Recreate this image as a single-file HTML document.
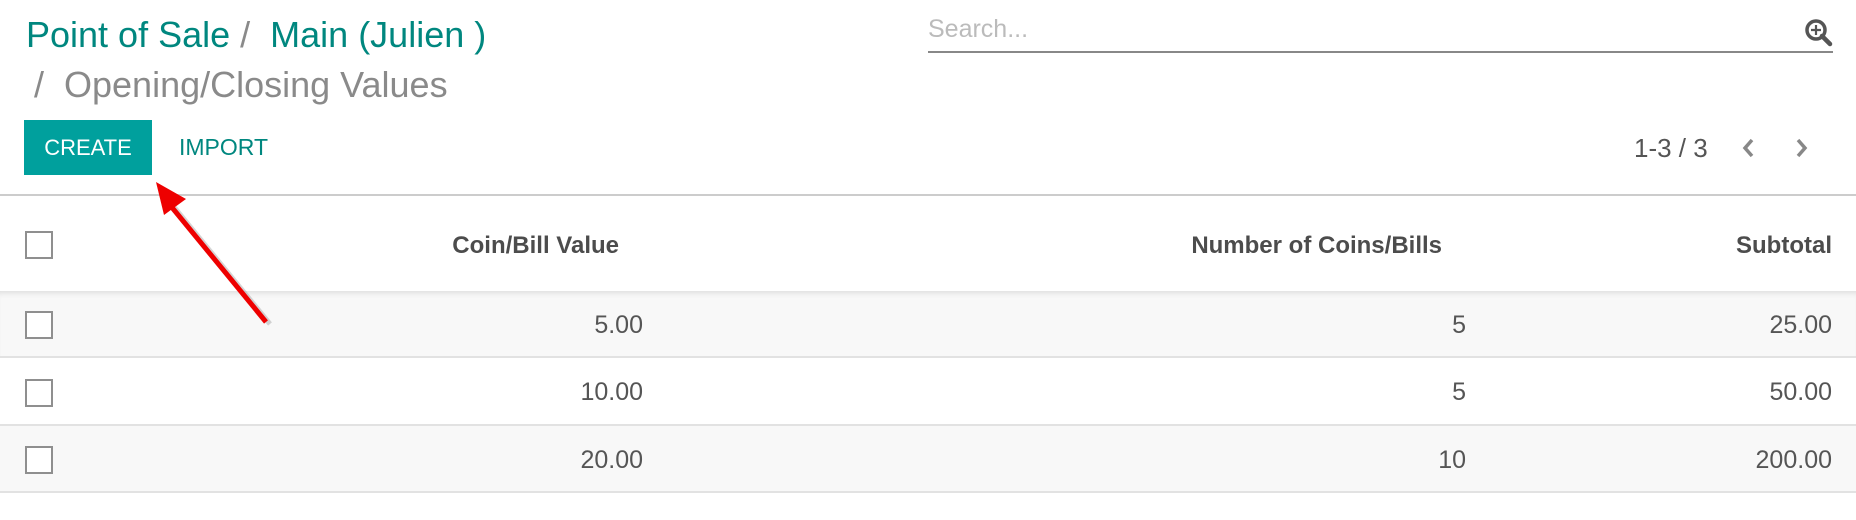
<!DOCTYPE html>
<html><head><meta charset="utf-8"><style>
*{margin:0;padding:0;box-sizing:border-box}
body{width:1856px;height:520px;background:#fff;font-family:"Liberation Sans",sans-serif;position:relative;overflow:hidden}
.a{position:absolute;white-space:nowrap}
.bc{font-size:36px;color:#00877f;top:14px}
.gr{color:#8a8a8a}
.hdr{font-weight:bold;font-size:24px;color:#4c4c4c;top:232px}
.v{font-size:25px;color:#555}
.cb{position:absolute;left:25px;width:28px;height:28px;border:2px solid #8f8f8f;background:#fff}
.row{position:absolute;left:0;width:1856px;height:67px;border-bottom:2px solid #e2e2e2}
</style></head><body>
<div class="a bc" style="left:26px">Point of Sale <span class="gr">/</span>&nbsp; Main (Julien )</div>
<div class="a bc gr" style="left:34px;top:64px">/&nbsp; Opening/Closing Values</div>

<div class="a" style="left:928px;top:15px;font-size:25px;color:#bbb">Search...</div>
<div class="a" style="left:928px;top:51px;width:905px;height:2px;background:#888"></div>
<svg class="a" style="left:1804px;top:18px" width="30" height="30" viewBox="0 0 30 30"><circle cx="12" cy="12" r="9" fill="none" stroke="#555" stroke-width="3.5"/><line x1="18" y1="18" x2="26" y2="26" stroke="#555" stroke-width="4.5" stroke-linecap="round"/><path d="M12 7v10M7 12h10" stroke="#555" stroke-width="2.2"/></svg>

<div class="a" style="left:24px;top:120px;width:128px;height:55px;background:#00a09d;color:#fff;font-size:22px;line-height:55px;text-align:center">CREATE</div>
<div class="a" style="left:179px;top:120px;line-height:55px;font-size:23px;color:#00877f">IMPORT</div>

<div class="a" style="left:1634px;top:133px;font-size:26px;color:#555">1-3 / 3</div>
<svg class="a" style="left:1738px;top:136px" width="80" height="24"><path d="M14 4 7 12l7 8" fill="none" stroke="#888" stroke-width="3.5"/><path d="M60 4l7 8-7 8" fill="none" stroke="#888" stroke-width="3.5"/></svg>

<div class="a" style="left:0;top:194px;width:1856px;height:2px;background:#ccc"></div>

<div class="cb" style="top:231px"></div>
<div class="a hdr" style="right:1237px">Coin/Bill Value</div>
<div class="a hdr" style="right:414px">Number of Coins/Bills</div>
<div class="a hdr" style="right:24px">Subtotal</div>

<div class="row" style="top:291px;background:#f8f8f8;box-shadow:inset 0 6px 6px -4px #ddd"></div>
<div class="row" style="top:359px;background:#fff"></div>
<div class="row" style="top:426px;background:#f8f8f8"></div>

<div class="cb" style="top:311px"></div>
<div class="cb" style="top:379px"></div>
<div class="cb" style="top:446px"></div>

<div class="a v" style="right:1213px;top:311px">5.00</div>
<div class="a v" style="right:390px;top:311px">5</div>
<div class="a v" style="right:24px;top:311px">25.00</div>
<div class="a v" style="right:1213px;top:378px">10.00</div>
<div class="a v" style="right:390px;top:378px">5</div>
<div class="a v" style="right:24px;top:378px">50.00</div>
<div class="a v" style="right:1213px;top:446px">20.00</div>
<div class="a v" style="right:390px;top:446px">10</div>
<div class="a v" style="right:24px;top:446px">200.00</div>

<svg class="a" style="left:0;top:0" width="400" height="400"><line x1="268" y1="322" x2="172" y2="205" stroke="#999" stroke-width="5" opacity=".4" transform="translate(2,2)"/><line x1="266" y1="322" x2="170" y2="205" stroke="#e00" stroke-width="5"/><path d="M156 182 L186 199 L164 215 Z" fill="#e00"/></svg>
</body></html>
